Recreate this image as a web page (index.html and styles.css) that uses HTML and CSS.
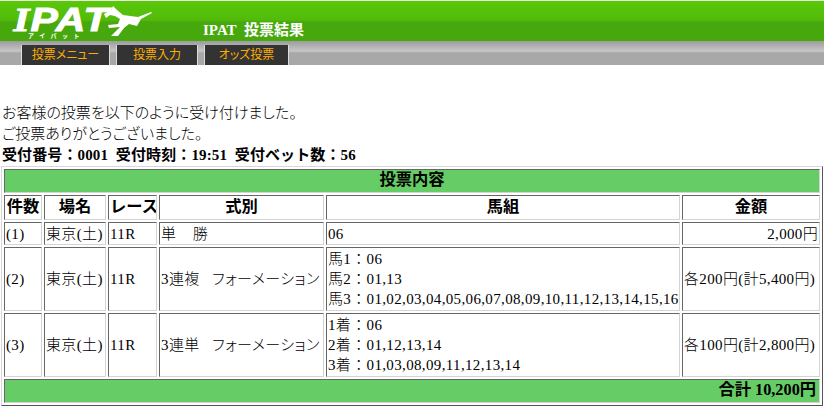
FILE: index.html
```html
<!DOCTYPE html>
<html lang="ja">
<head>
<meta charset="utf-8">
<title>IPAT 投票結果</title>
<link rel="stylesheet" href="styles.css">
</head>
<body>
<header class="masthead">
  <div class="logo">
    <div class="logo-mark">
      <span class="logo-word"><span class="logo-i">I</span>PAT</span>
      <svg class="horse" viewBox="104 5 50 33" width="50" height="33" aria-hidden="true"><path d="M104 14 L111 10 L113 6 L117 10 L123 15 L138 17 L151 12 L152 13 L141 19 L137 26 L129 24 L124 28 L118 36 L111 36 L120 27 L109 28 L108 25 L118 24 L120 19 L115 16 L110 15 L106 18 Z" fill="#fff"/></svg>
    </div>
    <span class="logo-kana">アイパット</span>
  </div>
  <h1 class="page-title">IPAT&nbsp;&nbsp;投票結果</h1>
</header>
<nav class="tabs">
  <a class="tab tab-menu">投票メニュー</a>
  <a class="tab tab-input">投票入力</a>
  <a class="tab tab-odds">オッズ投票</a>
</nav>
<main class="content">
  <p class="line">お客様の投票を以下のように受け付けました。</p>
  <p class="line">ご投票ありがとうございました。</p>
  <p class="line strong">受付番号：0001&nbsp;&nbsp;受付時刻：19:51&nbsp;&nbsp;受付ベット数：56</p>
  <table class="result">
    <colgroup>
      <col class="c1"><col class="c2"><col class="c3"><col class="c4"><col class="c5"><col class="c6">
    </colgroup>
    <tr class="band"><th colspan="6">投票内容</th></tr>
    <tr class="head"><th>件数</th><th>場名</th><th>レース</th><th>式別</th><th>馬組</th><th>金額</th></tr>
    <tr class="r1"><td>(1)</td><td>東京(土)</td><td>11R</td><td>単&nbsp;&nbsp;&nbsp;&nbsp;勝</td><td>06</td><td class="amount">2,000円</td></tr>
    <tr class="r3"><td>(2)</td><td>東京(土)</td><td>11R</td><td class="kind">3連複&nbsp;&nbsp;&nbsp;フォーメーション</td><td><div>馬1：06</div><div>馬2：01,13</div><div>馬3：01,02,03,04,05,06,07,08,09,10,11,12,13,14,15,16</div></td><td>各200円(計5,400円)</td></tr>
    <tr class="r3"><td>(3)</td><td>東京(土)</td><td>11R</td><td class="kind">3連単&nbsp;&nbsp;&nbsp;フォーメーション</td><td><div>1着：06</div><div>2着：01,12,13,14</div><div>3着：01,03,08,09,11,12,13,14</div></td><td>各100円(計2,800円)</td></tr>
    <tr class="band total"><th colspan="6">合計 10,200円</th></tr>
  </table>
</main>
</body>
</html>
```
FILE: styles.css
```css
* { box-sizing: border-box; }
html, body { margin: 0; padding: 0; background: #fff; }
body { font-family: "Liberation Serif", "Noto Sans CJK JP", serif; color: #000; width: 824px; overflow: hidden; }
.masthead {
  height: 41px; display: flex; align-items: flex-start; padding-left: 11px;
  background: linear-gradient(#5ac70a 0, #52bb0a 19px, #46a80c 21px, #46a80c 40px);
  border-top: 1px solid #e8f5dc;
}
.logo { width: 192px; position: relative; }
.logo-mark { display: flex; align-items: flex-start; height: 30px; }
.logo-word {
  display: block; width: 93px; margin-top: 6px;
  font: italic 700 34px/24px "Liberation Sans", sans-serif; color: #fff;
  -webkit-text-stroke: 1px #fff; letter-spacing: 1px;
  transform: scaleX(1.2); transform-origin: left center;
}
.logo-i { font-family: "Liberation Serif", serif; padding-left: 2px; }
.horse { margin-top: 4px; flex: none; }
.logo-kana { position: absolute; left: 17px; top: 31px; font: 700 6px/8px "Noto Sans CJK JP", sans-serif; color: #fff; letter-spacing: 5.5px; }
.page-title { margin: 20px 0 0; font-size: 15px; line-height: 18px; font-weight: 700; color: #fff; }
.tabs {
  height: 24px; display: flex; padding: 4px 0 0 21px; gap: 6px;
  background: linear-gradient(#9c9c9c 0, #c6c6c6 10px, #a8a8a8 12px, #a8a8a8 24px);
}
.tab {
  height: 20px; background: #333; color: #ffae00;
  border-left: 1px solid #ddd; border-right: 1px solid #ddd;
  font: 400 12px/18px "Noto Sans CJK JP", sans-serif; text-align: center;
  font-feature-settings: "palt";
}
.tab-menu { width: 89px; }
.tab-input { width: 82px; }
.tab-odds { width: 85px; }
.content { padding: 38px 0 0 2px; }
.line { margin: 0; font-size: 15px; font-weight: 300; line-height: 21px; white-space: nowrap; font-feature-settings: "palt"; }
.line.strong { font-weight: 700; font-feature-settings: normal; letter-spacing: .12px; }
.result {
  width: 822px; table-layout: fixed; border-collapse: separate; border-spacing: 2px;
  border: 1px solid; border-color: #d8d8d8 #555 #555 #d8d8d8; margin-left: -1px;
  font-size: 15px; line-height: 20px;
}
.c1 { width: 38px; } .c2 { width: 62px; } .c3 { width: 49px; } .c4 { width: 165px; } .c5 { width: 354px; } .c6 { width: 138px; }
.result th, .result td {
  border: 1px solid; border-color: #666 #d4d4d4 #d4d4d4 #666;
  padding: 0 1px; white-space: nowrap; overflow: hidden;
}
.result td { text-align: left; font-weight: 300; letter-spacing: .35px; }
.result th { text-align: center; font-weight: 700; font-size: 16.3px; padding-bottom: 2px; }
.band th { background: #66cc66; height: 24px; }
.head th { height: 25px; }
.r1 td { height: 23px; }
.r3 td { height: 64px; }
.result td.amount { text-align: right; }
.result .total th { text-align: right; height: 24px; padding-right: 3px; }
.result td.kind { letter-spacing: .4px; font-feature-settings: "palt"; }
```
